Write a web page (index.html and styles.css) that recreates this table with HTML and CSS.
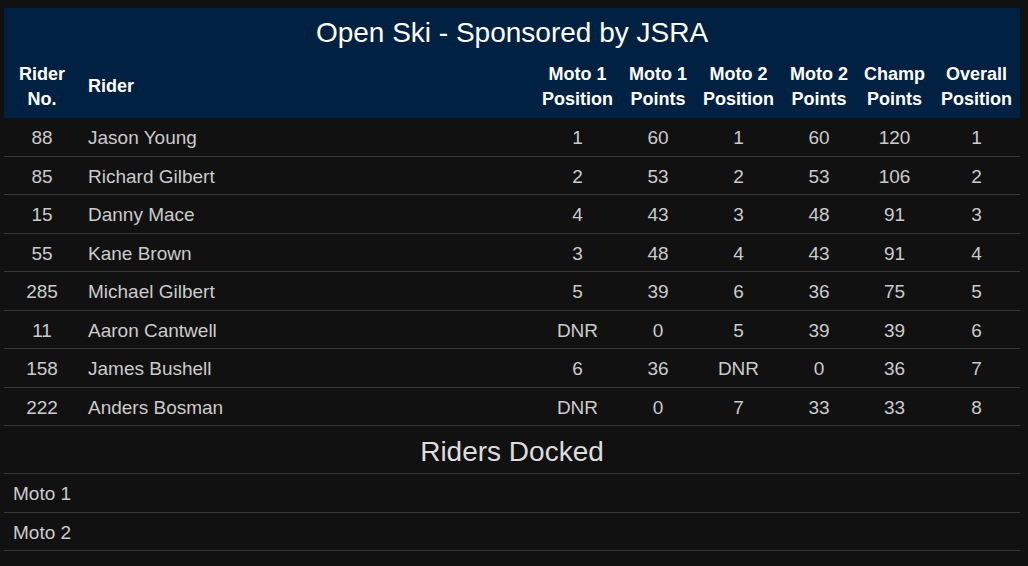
FILE: index.html
```html
<!DOCTYPE html>
<html lang="en">
<head>
<meta charset="utf-8">
<title>Open Ski - Sponsored by JSRA</title>
<link rel="stylesheet" href="styles.css">
</head>
<body>
<div class="page">
<table class="results">
  <thead>
    <tr class="title-row"><th colspan="8" class="title">Open Ski - Sponsored by JSRA</th></tr>
    <tr class="col-row">
      <th class="c-no">Rider<br>No.</th>
      <th class="c-name">Rider</th>
      <th class="c-num">Moto 1<br>Position</th>
      <th class="c-num">Moto 1<br>Points</th>
      <th class="c-num">Moto 2<br>Position</th>
      <th class="c-num">Moto 2<br>Points</th>
      <th class="c-num">Champ<br>Points</th>
      <th class="c-num">Overall<br>Position</th>
    </tr>
  </thead>
  <tbody>
    <tr><td class="c-no">88</td><td class="c-name">Jason Young</td><td class="c-num">1</td><td class="c-num">60</td><td class="c-num">1</td><td class="c-num">60</td><td class="c-num">120</td><td class="c-num">1</td></tr>
    <tr><td class="c-no">85</td><td class="c-name">Richard Gilbert</td><td class="c-num">2</td><td class="c-num">53</td><td class="c-num">2</td><td class="c-num">53</td><td class="c-num">106</td><td class="c-num">2</td></tr>
    <tr><td class="c-no">15</td><td class="c-name">Danny Mace</td><td class="c-num">4</td><td class="c-num">43</td><td class="c-num">3</td><td class="c-num">48</td><td class="c-num">91</td><td class="c-num">3</td></tr>
    <tr><td class="c-no">55</td><td class="c-name">Kane Brown</td><td class="c-num">3</td><td class="c-num">48</td><td class="c-num">4</td><td class="c-num">43</td><td class="c-num">91</td><td class="c-num">4</td></tr>
    <tr><td class="c-no">285</td><td class="c-name">Michael Gilbert</td><td class="c-num">5</td><td class="c-num">39</td><td class="c-num">6</td><td class="c-num">36</td><td class="c-num">75</td><td class="c-num">5</td></tr>
    <tr><td class="c-no">11</td><td class="c-name">Aaron Cantwell</td><td class="c-num">DNR</td><td class="c-num">0</td><td class="c-num">5</td><td class="c-num">39</td><td class="c-num">39</td><td class="c-num">6</td></tr>
    <tr><td class="c-no">158</td><td class="c-name">James Bushell</td><td class="c-num">6</td><td class="c-num">36</td><td class="c-num">DNR</td><td class="c-num">0</td><td class="c-num">36</td><td class="c-num">7</td></tr>
    <tr><td class="c-no">222</td><td class="c-name">Anders Bosman</td><td class="c-num">DNR</td><td class="c-num">0</td><td class="c-num">7</td><td class="c-num">33</td><td class="c-num">33</td><td class="c-num">8</td></tr>
    <tr class="docked-head"><td colspan="8">Riders Docked</td></tr>
    <tr class="docked"><td colspan="8">Moto 1</td></tr>
    <tr class="docked"><td colspan="8">Moto 2</td></tr>
  </tbody>
</table>
</div>
</body>
</html>
```
FILE: styles.css
```css
html, body {
  margin: 0;
  background: #111111;
}
.page {
  padding: 8px 8px 0 4px;
  font-family: "Liberation Sans", Arial, sans-serif;
}
.results {
  width: 100%;
  border-collapse: collapse;
  font-size: 18px;
  color: #cbcbcb;
}
.results thead {
  background: #012143;
  color: #ffffff;
}
.results th {
  font-weight: bold;
  line-height: 24.5px;
  padding: 9px 8px 7px;
  vertical-align: middle;
}
.results .title {
  font-size: 28px;
  font-weight: normal;
  line-height: 34px;
  padding: 8px 8px 3px 8px;
  text-align: center;
}
.results td {
  font-size: 19px;
  line-height: 21.5px;
  padding: 9px 8px 7px;
  border-bottom: 1px solid #383838;
}
.c-no {
  width: 60px;
  text-align: center;
}
.c-name {
  text-align: left;
}
.c-num {
  width: 1%;
  white-space: nowrap;
  text-align: center;
}
.results .docked-head td {
  font-size: 28px;
  line-height: 31px;
  padding: 10px 8px 6px;
  text-align: center;
  color: #dddddd;
}
.results .docked td {
  text-align: left;
  padding-left: 9px;
}
```
